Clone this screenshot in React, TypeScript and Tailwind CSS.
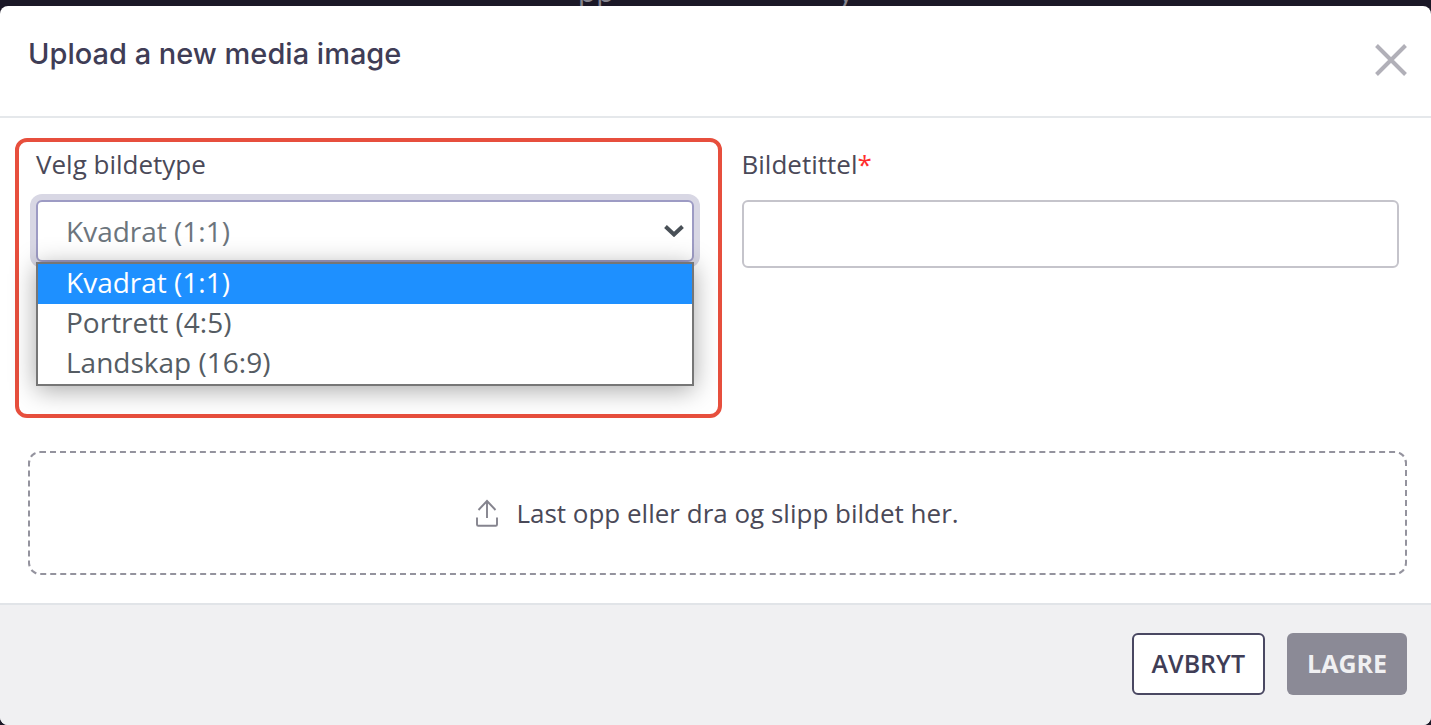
import { useState } from "react";

const IMAGE_TYPES = [
  { value: "square", label: "Kvadrat (1:1)" },
  { value: "portrait", label: "Portrett (4:5)" },
  { value: "landscape", label: "Landskap (16:9)" },
];

function CloseIcon() {
  return (
    <svg viewBox="0 0 32 32" className="size-8" fill="none" stroke="#b1b0b8" strokeWidth="4" aria-hidden="true">
      <path d="M1.5 1.5 30.5 30.5M30.5 1.5 1.5 30.5" />
    </svg>
  );
}

function UploadIcon() {
  return (
    <svg viewBox="0 0 22 28" className="h-7 w-[22px]" fill="none" stroke="#85848e" strokeWidth="1.9" aria-hidden="true">
      <path d="M1 18.500v7q0 1.300 1.300 1.300h17.400q1.300 0 1.300-1.300v-7" />
      <path d="M11 19V2M2.500 11 11 2l8.500 9" />
    </svg>
  );
}

function ChevronIcon() {
  return (
    <svg viewBox="0 0 20 12" className="h-3 w-5" fill="none" stroke="#495057" strokeWidth="4" aria-hidden="true">
      <path d="M1.500 1.500 10 9.500l8.500-8" />
    </svg>
  );
}

export default function App() {
  const [imageType, setImageType] = useState("square");
  const [isOpen, setIsOpen] = useState(true);
  const [title, setTitle] = useState("");

  const selectType = (value: string) => {
    setImageType(value);
    setIsOpen(false);
  };

  return (
    <div className="min-h-screen bg-[#1b1827] font-['Open_Sans',sans-serif] text-[#4a4958]">
      {/* Page behind the dialog */}
      <div className="flex h-[6px] items-end justify-center gap-56 overflow-hidden text-3xl leading-none text-[#85848e]" aria-hidden="true">
        <span>pp</span>
        <span>y</span>
      </div>

      <div role="dialog" aria-labelledby="dialog-title" className="overflow-hidden rounded-lg bg-white">
        <header className="flex items-start justify-between border-b-2 border-[#e5e8eb] pt-7 pr-6 pb-10 pl-7">
          <h1 id="dialog-title" className="font-['Inter',sans-serif] text-[29px] leading-10 font-medium text-[#3f3d56]">
            Upload a new media image
          </h1>
          <button type="button" aria-label="Close" className="pt-2.5">
            <CloseIcon />
          </button>
        </header>

        <div className="grid grid-cols-2 gap-12 pt-5 pr-8 pl-9">
          <div className="-mr-7 -ml-[21px] h-[280px] rounded-xl border-4 border-[#e74f3d] pr-6 pl-[17px]">
            <label htmlFor="image-type" className="block pt-1 pb-[18px] text-[26px] leading-9">
              Velg bildetype
            </label>
            <div className="relative">
              <select
                id="image-type"
                value={imageType}
                onChange={(e) => selectType(e.target.value)}
                className="block h-[62px] w-full appearance-none rounded-md border-2 border-[#9d9bc4] bg-white px-7 text-[28px] text-[#6c757d] ring-6 ring-[#d8d7e4] outline-none"
              >
                {IMAGE_TYPES.map((type) => (
                  <option key={type.value} value={type.value}>
                    {type.label}
                  </option>
                ))}
              </select>
              <span className="pointer-events-none absolute inset-y-0 right-2.5 flex items-center">
                <ChevronIcon />
              </span>

              {isOpen && (
                <ul
                  role="listbox"
                  className="absolute inset-x-0 top-full border-2 border-[#767676] bg-white text-[28px] leading-9 text-[#555c63] shadow-[0_4px_24px_rgba(0,0,0,0.35)]"
                >
                  {IMAGE_TYPES.map((type) => (
                    <li
                      key={type.value}
                      role="option"
                      aria-selected={type.value === imageType}
                      onClick={() => selectType(type.value)}
                      className="px-7 pb-1 aria-selected:bg-[#1e90ff] aria-selected:text-white"
                    >
                      {type.label}
                    </li>
                  ))}
                </ul>
              )}
            </div>
          </div>

          <div className="pt-1">
            <label htmlFor="image-title" className="block pt-1 pb-[18px] text-[26px] leading-9">
              Bildetittel<span className="text-[#ff2d2d]">*</span>
            </label>
            <input
              id="image-title"
              type="text"
              required
              value={title}
              onChange={(e) => setTitle(e.target.value)}
              className="block h-[68px] w-full rounded-md border-2 border-[#c5c4cb] px-7 text-[28px] outline-none"
            />
          </div>
        </div>

        <div className="pt-[33px] pr-6 pb-7 pl-7">
          <button
            type="button"
            className="flex h-[124px] w-full items-center justify-center gap-[18px] rounded-xl border-2 border-dashed border-[#94939e] text-[26px]"
          >
            <UploadIcon />
            Last opp eller dra og slipp bildet her.
          </button>
        </div>

        <footer className="flex justify-end gap-[22px] border-t-2 border-[#e1e4e8] bg-[#f0f0f2] px-6 pt-7 pb-[30px] text-[25px] font-semibold">
          <button type="button" className="h-[62px] rounded-md border-2 border-[#4a4862] bg-white px-[18px] text-[#3f3d56]">
            AVBRYT
          </button>
          <button type="button" className="h-[62px] rounded-md bg-[#8b8a96] px-5 font-bold text-[#f0f0f2]">
            LAGRE
          </button>
        </footer>
      </div>
    </div>
  );
}
